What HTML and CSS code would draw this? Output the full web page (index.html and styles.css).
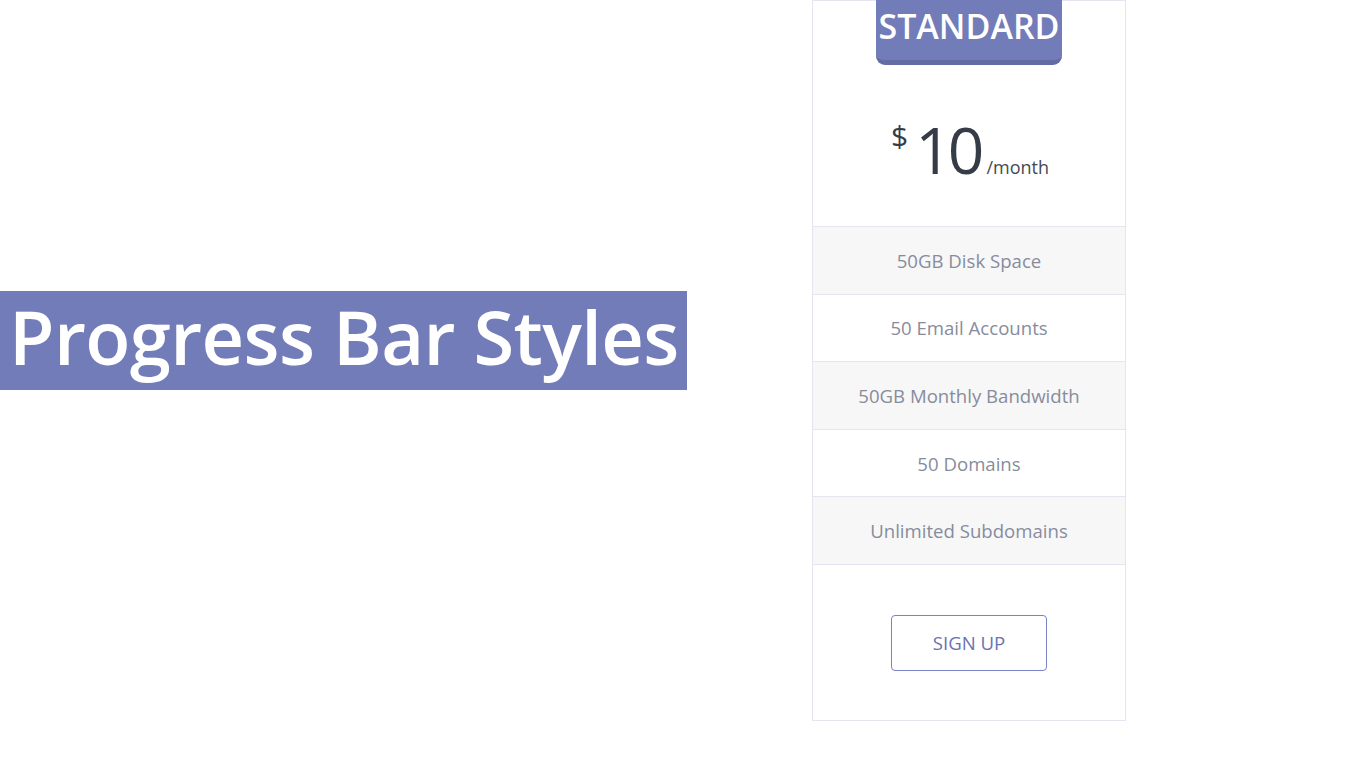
FILE: index.html
```html
<!DOCTYPE html>
<html>
<head>
<meta charset="utf-8">
<link rel="stylesheet" href="styles.css">
</head>
<body>
<div class="page">
  <div class="title-wrap">
    <h1 class="title">Progress Bar Styles</h1>
  </div>
  <div class="card">
    <div class="card-head">
      <div class="badge">STANDARD</div>
      <div class="price">
        <span class="currency">$</span>
        <span class="amount">10</span>
        <span class="period">/month</span>
      </div>
    </div>
    <ul class="features">
      <li class="row alt">50GB Disk Space</li>
      <li class="row">50 Email Accounts</li>
      <li class="row alt">50GB Monthly Bandwidth</li>
      <li class="row">50 Domains</li>
      <li class="row alt">Unlimited Subdomains</li>
    </ul>
    <div class="card-foot">
      <button class="signup">SIGN UP</button>
    </div>
  </div>
</div>
</body>
</html>
```

FILE: styles.css
```css
html, body {
  margin: 0;
  padding: 0;
  background: #ffffff;
}
body {
  font-family: "Open Sans", "Noto Sans", sans-serif;
}
.page {
  display: flex;
  align-items: flex-start;
  width: 1366px;
  height: 768px;
}
.title-wrap {
  margin-top: 291px;
  width: 687px;
  height: 99px;
  background: #727cb8;
  display: flex;
  align-items: center;
}
.title {
  margin: 0;
  padding-left: 9px;
  color: #ffffff;
  font-family: "Open Sans", sans-serif;
  font-weight: 600;
  font-size: 74px;
  letter-spacing: -0.6px;
  line-height: 1;
  white-space: nowrap;
  position: relative;
  top: -4px;
}
.card {
  margin-left: 125px;
  width: 312px;
  border: 1px solid #e3e5f3;
  display: flex;
  flex-direction: column;
}
.card-head {
  height: 225px;
  display: flex;
  flex-direction: column;
  align-items: center;
}
.badge {
  width: 186px;
  height: 60px;
  background: #727cb8;
  border-bottom: 5px solid #646ca3;
  border-radius: 0 0 9px 9px;
  color: #ffffff;
  font-weight: 600;
  font-size: 34px;
  line-height: 52px;
  text-align: center;
  margin-top: -1px;
}
.price {
  margin-top: 56px;
  display: flex;
  align-items: flex-start;
  color: #363c47;
  margin-left: 2px;
}
.currency {
  font-size: 30px;
  line-height: 1;
  margin-top: 0;
  margin-right: 7px;
}
.amount {
  font-size: 64px;
  line-height: 1;
  margin-top: -3px;
  letter-spacing: -4px;
}
.period {
  font-size: 18px;
  margin-top: 34px;
  margin-left: 6px;
  color: #444a55;
}
.features {
  list-style: none;
  margin: 0;
  padding: 0;
}
.row {
  height: 66.6px;
  border-top: 1px solid #e3e5f3;
  display: flex;
  align-items: center;
  justify-content: center;
  color: #878c9c;
  font-size: 18.6px;
}
.row.alt {
  background: #f7f7f8;
}
.card-foot {
  height: 155px;
  border-top: 1px solid #e3e5f3;
  display: flex;
  justify-content: center;
  align-items: flex-start;
}
.signup {
  margin-top: 50px;
  width: 156px;
  height: 56px;
  border: 1px solid #7a82c6;
  border-radius: 4px;
  background: #ffffff;
  color: #6a72b2;
  font-family: "Open Sans", sans-serif;
  font-size: 18.6px;
  padding: 0;
}
```
